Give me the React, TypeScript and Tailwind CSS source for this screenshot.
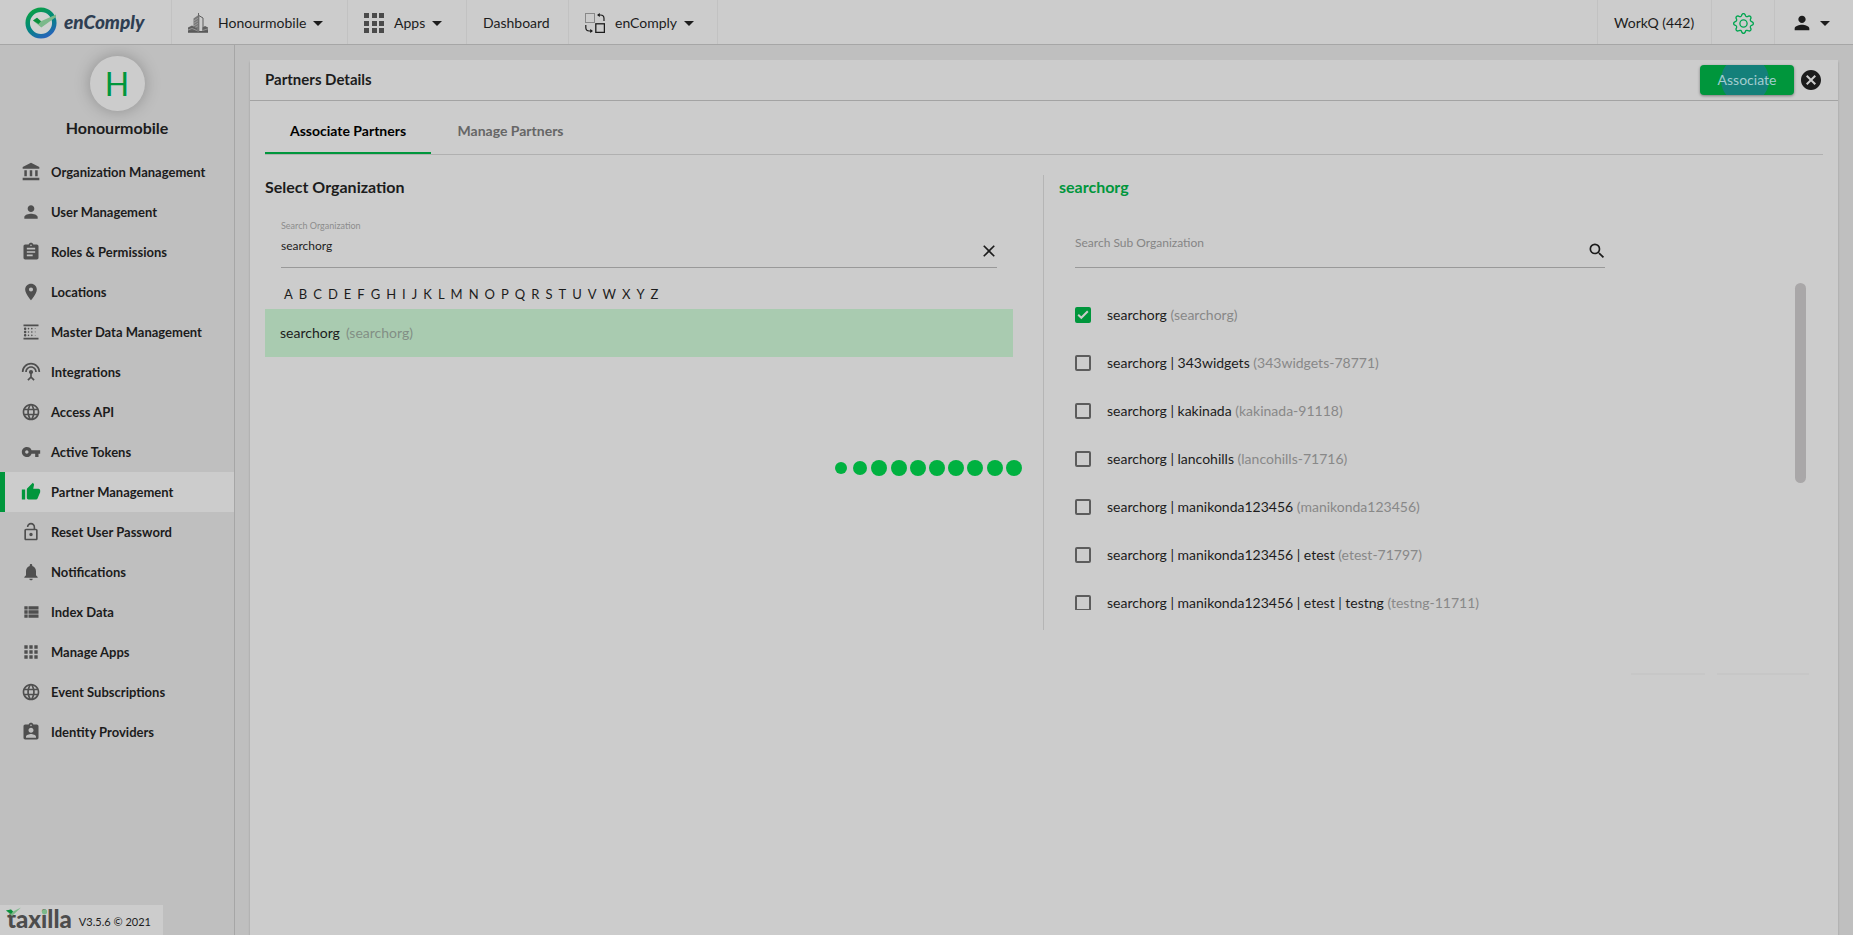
import { useState, type ReactNode } from "react";
import {
  MdAccountBalance,
  MdApps,
  MdArrowDropDown,
  MdAssignment,
  MdAssignmentInd,
  MdBlurLinear,
  MdCancel,
  MdClose,
  MdLanguage,
  MdLocationOn,
  MdLockOpen,
  MdNotifications,
  MdPerson,
  MdSearch,
  MdSettingsInputAntenna,
  MdThumbUp,
  MdVpnKey,
} from "react-icons/md";
import { BsGear } from "react-icons/bs";

function ViewListIcon() {
  return (
    <svg viewBox="0 0 24 24" width="20" height="20" fill="currentColor" aria-hidden="true">
      <path d="M4 14h4v-4H4v4zm0 5h4v-4H4v4zM4 9h4V5H4v4zm5 5h12v-4H9v4zm0 5h12v-4H9v4zM9 5v4h12V5H9z" />
    </svg>
  );
}

function BuildingIcon() {
  return (
    <svg viewBox="0 0 20 20" width="20" height="20" aria-hidden="true">
      <path d="M10.500 0v3" stroke="#666" strokeWidth="1" />
      <path d="M5.500 5.500 10.500 2v17h-5z" fill="#777" />
      <path d="M5.500 8l5-3M5.500 10.500l5-3M5.500 13l5-3M5.500 15.500l5-3" stroke="#aaa" strokeWidth="0.7" />
      <path d="M10.800 2.500 15 5v13.500h-4.200z" fill="#ccc" stroke="#5c5c5c" strokeWidth="1" />
      <path d="M0 14.500 4 12.500l5 3V19H0z" fill="#606060" />
      <path d="M0 17l4-1.500 5 2" stroke="#aaa" strokeWidth="0.7" fill="none" />
      <path d="M14.500 14.500 17 13l3 1.500V19h-5.500z" fill="#606060" />
      <path d="M14.500 17.500 20 15.800" stroke="#aaa" strokeWidth="0.7" />
      <path d="M0 19.200h20" stroke="#4a4a4a" strokeWidth="1" />
    </svg>
  );
}

function GridIcon() {
  const cells = [0, 8, 15];
  return (
    <svg viewBox="0 0 20 20" width="20" height="20" fill="#4a4a4a" aria-hidden="true">
      {cells.map((y) => cells.map((x) => <rect key={`${x}-${y}`} x={x} y={y} width="5" height="5" />))}
    </svg>
  );
}

function SwapIcon() {
  return (
    <svg viewBox="0 0 20 20" width="20" height="20" fill="none" stroke="#1c1c1c" aria-hidden="true">
      <rect x="0.5" y="0.5" width="9" height="9" strokeWidth="1" strokeDasharray="1 1" stroke="#444" />
      <rect x="10.800" y="10.800" width="8.600" height="8.600" strokeWidth="1.300" />
      <path d="M19 8V5.500Q19 2 15.500 2H13" strokeWidth="1.200" />
      <path d="M14.800 0 12 2l2.800 2z" fill="#1c1c1c" stroke="none" />
      <path d="M0.800 12v2.500Q0.800 18 4.300 18H6.500" strokeWidth="1.200" />
      <path d="M5.200 16 8 18l-2.800 2z" fill="#1c1c1c" stroke="none" />
    </svg>
  );
}

function BrandMark() {
  return (
    <svg viewBox="0 0 33 32" width="33" height="32" aria-hidden="true">
      <defs>
        <linearGradient id="ring" x1="0.2" y1="0" x2="0.700" y2="1">
          <stop offset="0" stopColor="#0a9f45" />
          <stop offset="0.500" stopColor="#00877c" />
          <stop offset="1" stopColor="#2565b8" />
        </linearGradient>
      </defs>
      <circle cx="17" cy="16" r="13.300" fill="#d0d2d0" stroke="url(#ring)" strokeWidth="4.500" />
      <path d="M9 13.500 13 10.800 17 14.200 32 7.500V10L17.300 20.500z" fill="#7cb98a" />
      <path d="M9 13.500 13 10.800 17 14.200 14.500 17z" fill="#0a8f3d" />
    </svg>
  );
}

const menu: { label: string; icon: ReactNode }[] = [
  { label: "Organization Management", icon: <MdAccountBalance size={20} /> },
  { label: "User Management", icon: <MdPerson size={20} /> },
  { label: "Roles & Permissions", icon: <MdAssignment size={20} /> },
  { label: "Locations", icon: <MdLocationOn size={20} /> },
  { label: "Master Data Management", icon: <MdBlurLinear size={20} /> },
  { label: "Integrations", icon: <MdSettingsInputAntenna size={20} /> },
  { label: "Access API", icon: <MdLanguage size={20} /> },
  { label: "Active Tokens", icon: <MdVpnKey size={20} /> },
  { label: "Partner Management", icon: <MdThumbUp size={20} /> },
  { label: "Reset User Password", icon: <MdLockOpen size={20} /> },
  { label: "Notifications", icon: <MdNotifications size={20} /> },
  { label: "Index Data", icon: <ViewListIcon /> },
  { label: "Manage Apps", icon: <MdApps size={20} /> },
  { label: "Event Subscriptions", icon: <MdLanguage size={20} /> },
  { label: "Identity Providers", icon: <MdAssignmentInd size={20} /> },
];

const subOrganizations = [
  { name: "searchorg", id: "searchorg" },
  { name: "searchorg | 343widgets", id: "343widgets-78771" },
  { name: "searchorg | kakinada", id: "kakinada-91118" },
  { name: "searchorg | lancohills", id: "lancohills-71716" },
  { name: "searchorg | manikonda123456", id: "manikonda123456" },
  { name: "searchorg | manikonda123456 | etest", id: "etest-71797" },
  { name: "searchorg | manikonda123456 | etest | testng", id: "testng-11711" },
];

const letters = "ABCDEFGHIJKLMNOPQRSTUVWXYZ".split("");

function Header() {
  return (
    <header className="z-10 flex h-[45px] shrink-0 border-b border-[#a6a6a6] bg-[#ccc] text-sm">
      <a href="#home" className="flex w-[171px] items-center gap-[7px] pt-0.5 pl-6">
        <BrandMark />
        <span className="pb-0.5 text-[19px] font-black text-[#2e3e52] italic">enComply</span>
      </a>
      <nav className="flex">
        <button className="flex w-44 items-center border-l border-[#c2c2c2] pt-0.5 pl-4">
          <BuildingIcon />
          <span className="pl-[10px]">Honourmobile</span>
          <MdArrowDropDown size={24} />
        </button>
        <button className="flex w-[119px] items-center border-l border-[#c2c2c2] pt-0.5 pl-4">
          <GridIcon />
          <span className="pl-[10px]">Apps</span>
          <MdArrowDropDown size={24} />
        </button>
        <a href="#dashboard" className="flex w-[102px] items-center border-l border-[#c2c2c2] pt-0.5 pl-4">
          Dashboard
        </a>
        <button className="flex w-[150px] items-center border-x border-[#c2c2c2] pt-0.5 pl-4">
          <SwapIcon />
          <span className="pl-[10px]">enComply</span>
          <MdArrowDropDown size={24} />
        </button>
      </nav>
      <div className="ml-auto flex">
        <a href="#workq" className="flex w-[114px] items-center border-l border-[#c2c2c2] pt-0.5 pl-4">
          WorkQ (442)
        </a>
        <button aria-label="Settings" className="flex w-16 items-center justify-center border-x border-[#c2c2c2] pt-0.5 text-[#00a550]">
          <BsGear size={21} />
        </button>
        <button aria-label="Account" className="flex w-[78px] items-center pt-0.5 pl-4">
          <MdPerson size={22} />
          <MdArrowDropDown size={24} />
        </button>
      </div>
    </header>
  );
}

function Sidebar() {
  return (
    <aside className="flex w-[235px] shrink-0 flex-col border-r border-[#a6a6a6] bg-[#bfbfbf]">
      <div className="flex h-[107px] flex-col items-center pt-[11px]">
        <div className="flex size-[55px] items-center justify-center rounded-full bg-[#ccc] text-[32px] text-[#00963c] shadow-[0_0_16px_rgba(0,0,0,0.25)]">
          H
        </div>
        <div className="pt-[5px] text-base leading-6 font-bold">Honourmobile</div>
      </div>
      <nav className="flex flex-col">
        {menu.map((item) => {
          const active = item.label === "Partner Management";
          return (
            <a
              key={item.label}
              href="#menu"
              aria-current={active ? "page" : undefined}
              className={
                active
                  ? "flex h-10 items-center gap-[10px] border-l-[5px] border-[#00963c] bg-[#ccc] pl-4 text-[13px] leading-5 font-bold"
                  : "flex h-10 items-center gap-[10px] pl-[21px] text-[13px] leading-5 font-bold"
              }
            >
              <span className={active ? "text-[#00963c]" : "text-[#4f4f4f]"}>{item.icon}</span>
              {item.label}
            </a>
          );
        })}
      </nav>
      <footer className="mt-auto flex h-[30px] w-[163px] items-center bg-[#ccc] pl-[7px]">
        <span className="relative pb-0.5 text-2xl leading-6 font-black text-[#4d4d4d]">
          taxilla
          <svg viewBox="0 0 48 10" className="absolute top-0 -left-[1px] h-[10px] w-12" aria-hidden="true">
            <path d="M0 3.500 5 2.500 7 4.500 15 0.500 6 9z" fill="#7cb98a" />
            <path d="M0 3.500 5 2.500 7 4.500 5 7z" fill="#0a8f3d" />
            <circle cx="38.500" cy="4.800" r="2.600" fill="#7cb98a" />
          </svg>
        </span>
        <span className="pt-1 pl-[7px] text-[11px]">V3.5.6 © 2021</span>
      </footer>
    </aside>
  );
}

function OrganizationPicker() {
  const [query, setQuery] = useState("searchorg");
  return (
    <section className="w-1/2 border-r border-[#b5b5b5] pr-[30px]">
      <h2 className="text-base leading-6 font-bold">Select Organization</h2>
      <div className="mx-4 mt-[17px] flex h-[52px] items-start border-b border-[#999]">
        <div className="flex grow flex-col pt-[2px]">
          <label htmlFor="organization" className="text-[9px] leading-4 text-[#8c8c8c]">
            Search Organization
          </label>
          <input
            id="organization"
            className="h-[22px] bg-transparent text-xs outline-none"
            value={query}
            onChange={(event) => setQuery(event.target.value)}
          />
        </div>
        <button aria-label="Clear" className="-mr-[2px] pt-[25px]" onClick={() => setQuery("")}>
          <MdClose size={20} />
        </button>
      </div>
      <div className="flex h-[41px] items-center gap-[6px] pt-[13px] pl-[19px] text-[13px]">
        {letters.map((letter) => (
          <button key={letter}>{letter}</button>
        ))}
      </div>
      <button className="flex h-12 w-full items-center gap-[6px] bg-[#a9cbb0] pl-[15px] text-sm">
        <span>searchorg</span>
        <span className="text-[#828f85]">(searchorg)</span>
      </button>
    </section>
  );
}

function SubOrganizations() {
  const [checked, setChecked] = useState<string[]>(["searchorg"]);
  const toggle = (id: string) =>
    setChecked((ids) => (ids.includes(id) ? ids.filter((entry) => entry !== id) : [...ids, id]));
  return (
    <section className="flex w-1/2 flex-col pr-[15px] pl-[15px]">
      <h2 className="text-base leading-6 font-bold text-[#00963c]">searchorg</h2>
      <div className="mt-[17px] ml-4 flex h-[52px] w-[530px] items-start border-b border-[#999]">
        <input
          aria-label="Search Sub Organization"
          placeholder="Search Sub Organization"
          className="mt-[14px] h-6 grow bg-transparent text-xs outline-none placeholder:text-[#858585]"
        />
        <button aria-label="Search" className="-mr-[2px] pt-[25px]">
          <MdSearch size={20} />
        </button>
      </div>
      <div className="mt-[15px] flex h-[327px] items-start justify-between overflow-hidden pl-4">
        <ul className="pt-2">
          {subOrganizations.map((org) => (
            <li key={org.id}>
              <label className="flex h-12 items-center text-sm">
                <span className="relative flex size-4">
                  <input
                    type="checkbox"
                    checked={checked.includes(org.id)}
                    onChange={() => toggle(org.id)}
                    className="size-4 appearance-none rounded-xs border-2 border-[#5c5c5c] checked:border-[#00963c] checked:bg-[#00963c]"
                  />
                  {checked.includes(org.id) && (
                    <svg viewBox="0 0 16 16" className="pointer-events-none absolute inset-0" aria-hidden="true">
                      <path d="M3.200 7.800 6.300 10.800 12.800 4.300" fill="none" stroke="#ccc" strokeWidth="2" />
                    </svg>
                  )}
                </span>
                <span className="pl-4 leading-4">
                  {org.name} <span className="text-[#888]">({org.id})</span>
                </span>
              </label>
            </li>
          ))}
        </ul>
        <div className="mr-[2px] h-[200px] w-[11px] rounded-full bg-[#a9a7a8]" />
      </div>
    </section>
  );
}

function Loader() {
  const sizes = [12, 14, 16, 16, 16, 16, 16, 16, 16, 16];
  return (
    <div role="status" aria-label="Loading" className="pointer-events-none fixed inset-0 z-20 flex items-center justify-center pl-0.5">
      <div className="grid w-48 grid-cols-10 place-items-center">
        {sizes.map((size, index) => (
          <span key={index} className="rounded-full bg-[#00b140]" style={{ width: size, height: size }} />
        ))}
      </div>
    </div>
  );
}

export default function App() {
  return (
    <div className="flex h-screen flex-col overflow-hidden bg-[#bfbfbf] font-[Lato,sans-serif] text-[#1c1c1c]">
      <Header />
      <div className="flex min-h-0 grow">
        <Sidebar />
        <main className="mx-[15px] mt-[15px] flex grow flex-col bg-[#ccc] shadow-[0_2px_2px_rgba(0,0,0,0.2)]">
          <div className="flex h-[41px] shrink-0 items-center border-b border-[#a3a3a3] pr-[15px] pl-[15px]">
            <h1 className="pb-0.5 text-[15px] leading-5 font-bold">Partners Details</h1>
            <button className="relative ml-auto h-[30px] w-[94px] overflow-hidden rounded-sm bg-[#00963c] text-sm text-[#a3cdd0] shadow-[0_1px_3px_rgba(0,0,0,0.4)]">
              <span className="absolute -top-[9px] left-[21px] size-12 rounded-full bg-[#14807a]" />
              <span className="relative">Associate</span>
            </button>
            <button aria-label="Close" className="ml-[5px]">
              <MdCancel size={24} />
            </button>
          </div>
          <div className="flex grow flex-col px-[15px]">
            <div role="tablist" className="flex h-[54px] border-b border-[#b0b0b0] text-sm font-bold">
              <button role="tab" aria-selected="true" className="w-[166px] border-b-2 border-[#00963c] pt-2 text-black">
                Associate Partners
              </button>
              <button role="tab" aria-selected="false" className="w-[159px] pt-[6px] text-[#666]">
                Manage Partners
              </button>
            </div>
            <div className="mt-5 flex h-[455px]">
              <OrganizationPicker />
              <SubOrganizations />
            </div>
            <div className="mt-[43px] mr-[14px] flex justify-end gap-3">
              <div className="h-[2px] w-[74px] bg-[#c7c7c7]" />
              <div className="h-[2px] w-[92px] bg-[#c7c7c7]" />
            </div>
          </div>
        </main>
      </div>
      <Loader />
    </div>
  );
}
